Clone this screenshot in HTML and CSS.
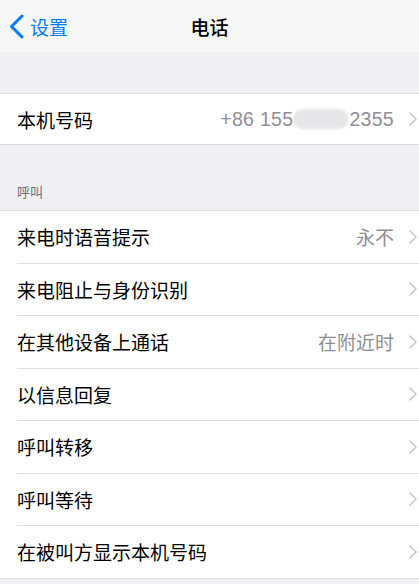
FILE: index.html
```html
<!DOCTYPE html>
<html lang="zh-CN">
<head>
    <meta charset="UTF-8">
    <meta name="viewport" content="width=device-width, initial-scale=1.0">
    <title>电话</title>
    <link rel="stylesheet" href="styles.css">
</head>
<body>
    <div class="navbar">
        <a class="back" href="#">
            <svg class="back-icon" width="15" height="25" viewBox="0 0 15 25">
                <path d="M13 2 L2.5 12.5 L13 23" fill="none" stroke="#007aff" stroke-width="3" stroke-linecap="round" stroke-linejoin="round"/>
            </svg>
            <span>设置</span>
        </a>
        <div class="title">电话</div>
    </div>

    <ul class="group first">
        <li class="cell">
            <div class="cell-body">
                <span class="label">本机号码</span>
                <span class="value number">+86 155<span class="mask"></span>2355</span>
                <svg class="chevron" width="8" height="14" viewBox="0 0 8 14"><path d="M1 1 L7 7 L1 13" fill="none" stroke="#c7c7cc" stroke-width="1.6" stroke-linecap="round" stroke-linejoin="round"/></svg>
            </div>
        </li>
    </ul>

    <div class="section-header">呼叫</div>
    <ul class="group">
        <li class="cell">
            <div class="cell-body">
                <span class="label">来电时语音提示</span>
                <span class="value">永不</span>
                <svg class="chevron" width="8" height="14" viewBox="0 0 8 14"><path d="M1 1 L7 7 L1 13" fill="none" stroke="#c7c7cc" stroke-width="1.6" stroke-linecap="round" stroke-linejoin="round"/></svg>
            </div>
        </li>
        <li class="cell">
            <div class="cell-body">
                <span class="label">来电阻止与身份识别</span>
                <svg class="chevron" width="8" height="14" viewBox="0 0 8 14"><path d="M1 1 L7 7 L1 13" fill="none" stroke="#c7c7cc" stroke-width="1.6" stroke-linecap="round" stroke-linejoin="round"/></svg>
            </div>
        </li>
        <li class="cell">
            <div class="cell-body">
                <span class="label">在其他设备上通话</span>
                <span class="value">在附近时</span>
                <svg class="chevron" width="8" height="14" viewBox="0 0 8 14"><path d="M1 1 L7 7 L1 13" fill="none" stroke="#c7c7cc" stroke-width="1.6" stroke-linecap="round" stroke-linejoin="round"/></svg>
            </div>
        </li>
        <li class="cell">
            <div class="cell-body">
                <span class="label">以信息回复</span>
                <svg class="chevron" width="8" height="14" viewBox="0 0 8 14"><path d="M1 1 L7 7 L1 13" fill="none" stroke="#c7c7cc" stroke-width="1.6" stroke-linecap="round" stroke-linejoin="round"/></svg>
            </div>
        </li>
        <li class="cell">
            <div class="cell-body">
                <span class="label">呼叫转移</span>
                <svg class="chevron" width="8" height="14" viewBox="0 0 8 14"><path d="M1 1 L7 7 L1 13" fill="none" stroke="#c7c7cc" stroke-width="1.6" stroke-linecap="round" stroke-linejoin="round"/></svg>
            </div>
        </li>
        <li class="cell">
            <div class="cell-body">
                <span class="label">呼叫等待</span>
                <svg class="chevron" width="8" height="14" viewBox="0 0 8 14"><path d="M1 1 L7 7 L1 13" fill="none" stroke="#c7c7cc" stroke-width="1.6" stroke-linecap="round" stroke-linejoin="round"/></svg>
            </div>
        </li>
        <li class="cell">
            <div class="cell-body">
                <span class="label">在被叫方显示本机号码</span>
                <svg class="chevron" width="8" height="14" viewBox="0 0 8 14"><path d="M1 1 L7 7 L1 13" fill="none" stroke="#c7c7cc" stroke-width="1.6" stroke-linecap="round" stroke-linejoin="round"/></svg>
            </div>
        </li>
    </ul>
</body>
</html>
```

FILE: styles.css
```css
body {
    margin: 0;
    background-color: #efeff4;
    font-family: "Liberation Sans", "Noto Sans CJK SC", sans-serif;
    color: #000;
    overflow: hidden;
}
.navbar {
    position: relative;
    height: 52px;
    background-color: #f7f7f8;
    display: flex;
    align-items: center;
    justify-content: center;
}
.back {
    position: absolute;
    left: 9px;
    top: 0;
    height: 52px;
    display: flex;
    align-items: center;
    gap: 6px;
    color: #007aff;
    text-decoration: none;
    font-size: 19px;
}
.back-icon {
    display: block;
}
.title {
    font-size: 19px;
    font-weight: 500;
    font-family: "Noto Sans CJK SC", sans-serif;
}
.group {
    list-style: none;
    margin: 0;
    padding: 0;
    background: #fff;
    border-top: 1px solid #dcdce0;
    border-bottom: 1px solid #dcdce0;
}
.group.first {
    margin-top: 41px;
}
.section-header {
    padding: 40px 17px 9px;
    font-size: 13px;
    color: #6d6d72;
    line-height: 16px;
}
.cell {
    padding-left: 17px;
}
.cell-body {
    display: flex;
    align-items: center;
    padding-right: 2px;
    border-bottom: 1px solid #e0e0e4;
    box-sizing: border-box;
    height: 52.5px;
}
.cell:last-child .cell-body {
    border-bottom: none;
    height: 51.5px;
}
.group.first .cell-body {
    height: 50px;
}
.label {
    flex: 1;
    font-size: 19px;
}
.value {
    font-size: 19px;
    color: #8e8e93;
    margin-right: 15px;
    display: flex;
    align-items: center;
}
.value.number {
    font-size: 19.5px;
    letter-spacing: 0.3px;
}
.mask {
    display: inline-block;
    width: 56px;
    height: 20px;
    border-radius: 10px;
    background: #e6e6e8;
    filter: blur(1.5px);
}
.chevron {
    display: block;
}
```
